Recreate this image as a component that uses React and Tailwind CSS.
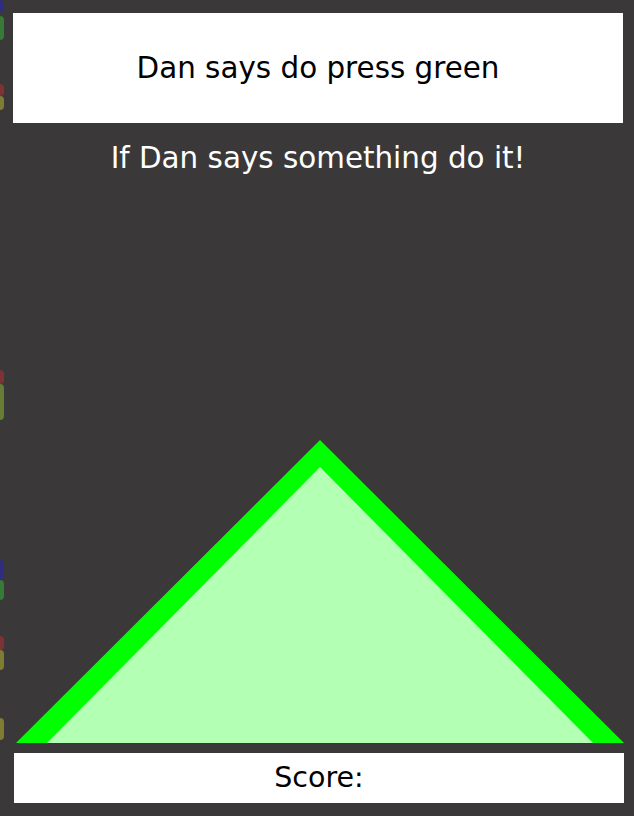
import React from 'react';

// Faint scraps of the background that peek out at the left edge
const scraps = [
  { top: 'top-0', h: 'h-[12px]', color: 'bg-[#2f2d80]' },
  { top: 'top-[16px]', h: 'h-[24px]', color: 'bg-[#357a35]' },
  { top: 'top-[84px]', h: 'h-[12px]', color: 'bg-[#7d3336]' },
  { top: 'top-[96px]', h: 'h-[14px]', color: 'bg-[#807c33]' },
  { top: 'top-[370px]', h: 'h-[14px]', color: 'bg-[#7d3336]' },
  { top: 'top-[384px]', h: 'h-[36px]', color: 'bg-[#677c35]' },
  { top: 'top-[560px]', h: 'h-[20px]', color: 'bg-[#2f2d80]' },
  { top: 'top-[580px]', h: 'h-[20px]', color: 'bg-[#357a35]' },
  { top: 'top-[636px]', h: 'h-[14px]', color: 'bg-[#7d3336]' },
  { top: 'top-[650px]', h: 'h-[20px]', color: 'bg-[#807c33]' },
  { top: 'top-[718px]', h: 'h-[22px]', color: 'bg-[#807c33]' },
];

function Triangle() {
  return (
    <svg width="610" height="303" viewBox="0 0 610 303" className="overflow-visible block">
      {/* outer green */}
      <polygon points="3,303 307,0 611,303" fill="#00ff00" />
      {/* inner pale fill */}
      <polygon points="34,303 307,27 580,303" fill="#b3ffb3" />
    </svg>
  );
}

function App() {
  return (
    <div className="relative h-[816px] w-full overflow-hidden bg-[#3a3839] flex flex-col pl-[13px] pr-[11px] pt-[13px] pb-[13px] font-['DejaVu_Sans',sans-serif]">
      {scraps.map((s, i) => (
        <div key={i} className={`absolute left-0 w-[4px] rounded-r-sm ${s.top} ${s.h} ${s.color}`} />
      ))}

      {/* Instruction box */}
      <div className="h-[110px] bg-white flex items-center justify-center text-[29.4px] text-black">
        Dan says do press green
      </div>

      {/* Rule */}
      <p className="mt-[15px] h-[40px] flex items-center justify-center text-white text-[29.4px]">
        If Dan says something do it!
      </p>

      {/* Green button */}
      <div className="flex-1 flex items-end">
        <Triangle />
      </div>

      {/* Score */}
      <div className="mt-[10px] ml-[1px] -mr-[1px] h-[50px] bg-white flex items-center justify-center text-[28.5px] text-black">
        Score:
      </div>
    </div>
  );
}

export default App;
